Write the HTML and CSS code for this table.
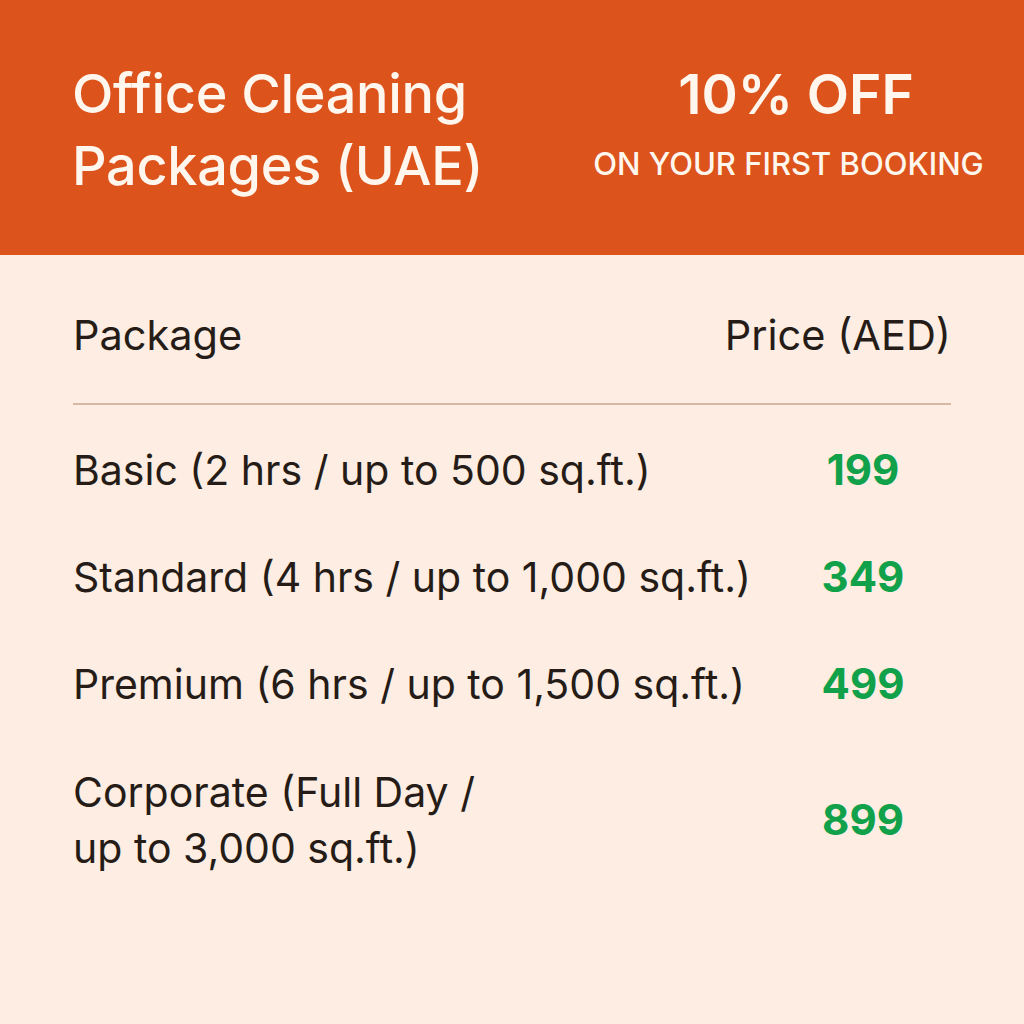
FILE: index.html
```html
<!DOCTYPE html>
<html>
<head>
<meta charset="utf-8">
<link rel="stylesheet" href="styles.css">
</head>
<body>
<header class="banner">
  <h1 class="title">Office Cleaning<br>Packages (UAE)</h1>
  <div class="offer">
    <div class="offer-big">10% OFF</div>
    <div class="offer-small">ON YOUR FIRST BOOKING</div>
  </div>
</header>
<main class="table">
  <div class="thead">
    <span>Package</span>
    <span>Price (AED)</span>
  </div>
  <div class="rule"></div>
  <div class="row row-first"><span class="name">Basic (2 hrs / up to 500 sq.ft.)</span><span class="price">199</span></div>
  <div class="row"><span class="name">Standard (4 hrs / up to 1,000 sq.ft.)</span><span class="price">349</span></div>
  <div class="row"><span class="name">Premium (6 hrs / up to 1,500 sq.ft.)</span><span class="price">499</span></div>
  <div class="row row-tall"><span class="name">Corporate (Full Day /<br>up to 3,000 sq.ft.)</span><span class="price">899</span></div>
</main>
</body>
</html>
```

FILE: styles.css
```css
* { box-sizing: border-box; }
html, body { margin: 0; padding: 0; }
body {
  width: 1024px;
  height: 1024px;
  background: #fdede2;
  font-family: Inter, "Noto Sans", sans-serif;
  color: #261c17;
  overflow: hidden;
}
.banner {
  height: 255px;
  background: #dc531c;
  display: flex;
  align-items: flex-start;
  padding: 58px 0 0 72px;
  color: #fff7ee;
}
.title {
  margin: 0;
  font-size: 54px;
  font-weight: 500;
  line-height: 72px;
  letter-spacing: -0.3px;
  width: 500px;
}
.offer {
  flex: 1;
  text-align: center;
  padding-right: 4px;
}
.offer-big {
  font-size: 55px;
  font-weight: 600;
  line-height: 72px;
}
.offer-small {
  font-size: 31px;
  font-weight: 500;
  line-height: 40px;
  margin-top: 14px;
  padding-right: 15px;
}
.table {
  padding: 0 73px;
}
.thead {
  display: flex;
  justify-content: space-between;
  font-size: 41.5px;
  line-height: 48px;
  padding-top: 56px;
  height: 148px;
}
.rule {
  height: 2px;
  background: #d6b9a5;
}
.row {
  display: flex;
  align-items: center;
  justify-content: space-between;
  font-size: 41px;
  line-height: 56px;
  height: 107px;
}
.row-first { margin-top: 11px; }
.row-tall { height: 165px; }
.price {
  color: #10a14a;
  font-weight: 700;
  font-size: 42px;
  width: 160px;
  text-align: center;
  margin-right: 8px;
}
```
